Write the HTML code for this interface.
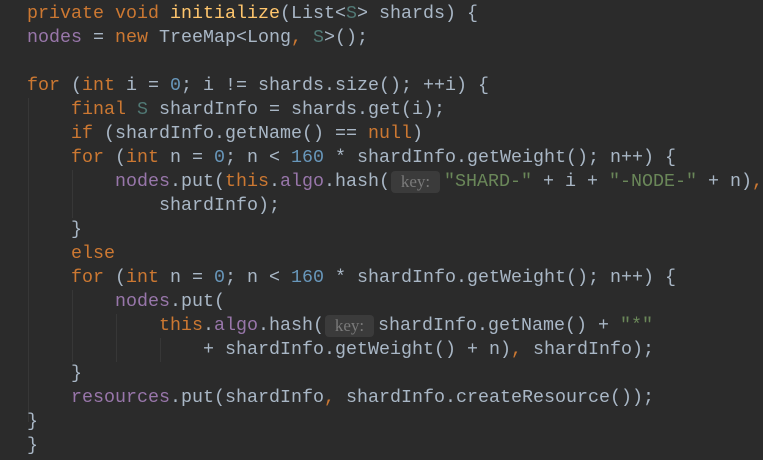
<!DOCTYPE html>
<html><head><meta charset="utf-8"><style>
html,body{margin:0;padding:0;background:#2b2b2b;width:763px;height:460px;overflow:hidden}
.c{position:absolute;left:27px;top:2px;font-family:"Liberation Mono",monospace;font-size:18.33px;color:#a9b7c6}
.l{height:24px;line-height:24px;white-space:pre}
.k{color:#cc7832}.m{color:#ffc66d}.f{color:#9876aa}.n{color:#6897bb}.s{color:#6a8759}.t{color:#507874}
.h{display:inline-block;width:49px;height:22px;line-height:22px;background:#3b3b3b;border-radius:4px;color:#7a7a7a;font-family:"Liberation Serif",serif;font-size:17px;text-align:center;margin:0 4px 0 1px;vertical-align:top;margin-top:1px;white-space:nowrap}
.g{position:absolute;width:1px;background:#373737}
</style></head><body>
<div class="g" style="left:28px;top:98px;height:324px"></div>
<div class="g" style="left:72px;top:170px;height:48px"></div>
<div class="g" style="left:72px;top:290px;height:72px"></div>
<div class="g" style="left:116px;top:314px;height:48px"></div>
<div class="g" style="left:160px;top:338px;height:24px"></div>
<div class="c">
<div class="l"><span class="k">private void </span><span class="m">initialize</span>(List&lt;<span class="t">S</span>&gt; shards) {</div>
<div class="l"><span class="f">nodes</span> = <span class="k">new </span>TreeMap&lt;Long<span class="k">, </span><span class="t">S</span>&gt;();</div>
<div class="l"> </div>
<div class="l"><span class="k">for </span>(<span class="k">int </span>i = <span class="n">0</span>; i != shards.size(); ++i) {</div>
<div class="l">    <span class="k">final </span><span class="t">S</span> shardInfo = shards.get(i);</div>
<div class="l">    <span class="k">if </span>(shardInfo.getName() == <span class="k">null</span>)</div>
<div class="l">    <span class="k">for </span>(<span class="k">int </span>n = <span class="n">0</span>; n &lt; <span class="n">160</span> * shardInfo.getWeight(); n++) {</div>
<div class="l">        <span class="f">nodes</span>.put(<span class="k">this</span>.<span class="f">algo</span>.hash(<span class="h">key:</span><span class="s">"SHARD-"</span> + i + <span class="s">"-NODE-"</span> + n)<span class="k">,</span></div>
<div class="l">            shardInfo);</div>
<div class="l">    }</div>
<div class="l">    <span class="k">else</span></div>
<div class="l">    <span class="k">for </span>(<span class="k">int </span>n = <span class="n">0</span>; n &lt; <span class="n">160</span> * shardInfo.getWeight(); n++) {</div>
<div class="l">        <span class="f">nodes</span>.put(</div>
<div class="l">            <span class="k">this</span>.<span class="f">algo</span>.hash(<span class="h">key:</span>shardInfo.getName() + <span class="s">"*"</span></div>
<div class="l">                + shardInfo.getWeight() + n)<span class="k">, </span>shardInfo);</div>
<div class="l">    }</div>
<div class="l">    <span class="f">resources</span>.put(shardInfo<span class="k">, </span>shardInfo.createResource());</div>
<div class="l">}</div>
<div class="l">}</div>
</div>
</body></html>
